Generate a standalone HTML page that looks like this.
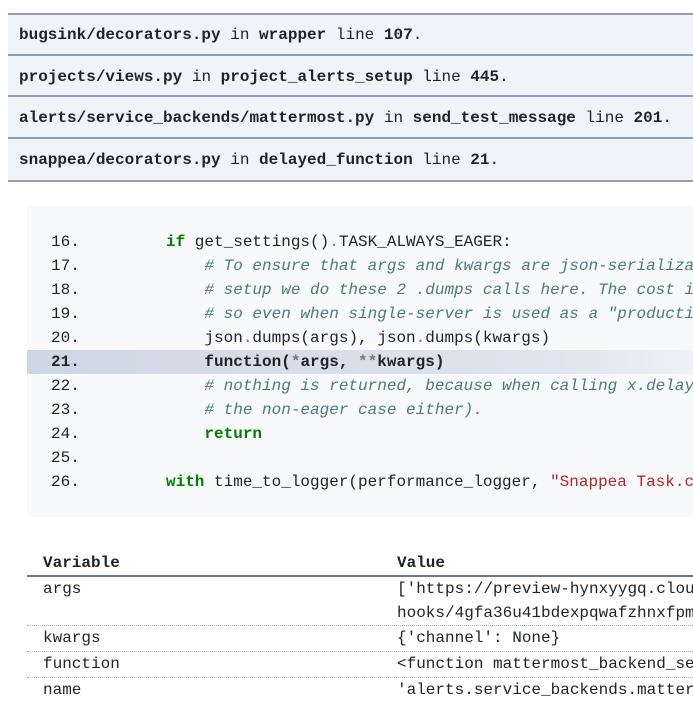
<!DOCTYPE html>
<html><head><meta charset="utf-8"><style>
html,body{margin:0;width:693px;height:718px;overflow:hidden}
body{background:#fff;font-family:"Liberation Mono",monospace;font-size:16px;color:#1f2328;position:relative}
.fr{position:absolute;left:8px;width:685px;height:41px;background:#f0f3f8;border-bottom:2px solid #8f9db3;line-height:41px;box-sizing:border-box;padding-left:11px;white-space:nowrap;overflow:hidden}
b{font-weight:bold}
.code{position:absolute;left:27px;top:206px;width:666px;height:311px;background:#f8f9fb;overflow:hidden}
.ln{position:absolute;left:0;width:666px;height:24px;line-height:25px;white-space:pre;overflow:hidden}
.ln .n{position:absolute;left:24px}
.ln .c{position:absolute;left:139px}
.hl{background:linear-gradient(90deg,#cdd7e3,#dfe5ee 80%,#eef1f5)}
.k{color:#008000;font-weight:bold}
.cm{color:#4b7b7b;font-style:italic}
.s{color:#ba2121}
.o{color:#777}
.t{position:absolute;left:27px;width:666px;white-space:nowrap;overflow:hidden}
.t span{position:absolute}
</style></head><body>
<div class="fr" style="top:13px;border-top:2px solid #8f9db3;height:43px;line-height:40px"><b>bugsink/decorators.py</b> in <b>wrapper</b> line <b>107</b>.</div>
<div class="fr" style="top:56px;line-height:42px"><b>projects/views.py</b> in <b>project_alerts_setup</b> line <b>445</b>.</div>
<div class="fr" style="top:97px;height:42px;line-height:42px"><b>alerts/service_backends/mattermost.py</b> in <b>send_test_message</b> line <b>201</b>.</div>
<div class="fr" style="top:139px;height:43px;line-height:42px"><b>snappea/decorators.py</b> in <b>delayed_function</b> line <b>21</b>.</div>

<div class="code">
<div class="ln" style="top:24px"><span class="n">16.</span><span class="c"><span class="k">if</span> get_settings()<span class="o">.</span>TASK_ALWAYS_EAGER:</span></div>
<div class="ln" style="top:48px"><span class="n">17.</span><span class="c">    <span class="cm"># To ensure that args and kwargs are json-serializable</span></span></div>
<div class="ln" style="top:72px"><span class="n">18.</span><span class="c">    <span class="cm"># setup we do these 2 .dumps calls here. The cost is</span></span></div>
<div class="ln" style="top:96px"><span class="n">19.</span><span class="c">    <span class="cm"># so even when single-server is used as a "production"</span></span></div>
<div class="ln" style="top:120px"><span class="n">20.</span><span class="c">    json<span class="o">.</span>dumps(args), json<span class="o">.</span>dumps(kwargs)</span></div>
<div class="ln hl" style="top:144px;font-weight:bold"><span class="n">21.</span><span class="c">    function(<span class="o">*</span>args, <span class="o">**</span>kwargs)</span></div>
<div class="ln" style="top:168px"><span class="n">22.</span><span class="c">    <span class="cm"># nothing is returned, because when calling x.delay()</span></span></div>
<div class="ln" style="top:192px"><span class="n">23.</span><span class="c">    <span class="cm"># the non-eager case either).</span></span></div>
<div class="ln" style="top:216px"><span class="n">24.</span><span class="c">    <span class="k">return</span></span></div>
<div class="ln" style="top:240px"><span class="n">25.</span></div>
<div class="ln" style="top:264px"><span class="n">26.</span><span class="c"><span class="k">with</span> time_to_logger(performance_logger, <span class="s">"Snappea Task.call"</span></span></div>
</div>

<div class="t" style="top:551px;height:24px;line-height:24px;font-weight:bold;border-bottom:2px solid #6b7a8f"><span style="left:16px">Variable</span><span style="left:370px">Value</span></div>
<div class="t" style="top:577px;height:48px;line-height:24px;border-bottom:1px dotted #a9b3c2"><span style="left:16px">args</span><span style="left:370px">['https://preview-hynxyygq.cloud</span><span style="left:370px;top:24px">hooks/4gfa36u41bdexpqwafzhnxfpm</span></div>
<div class="t" style="top:626px;height:25px;line-height:25px;border-bottom:1px dotted #a9b3c2"><span style="left:16px">kwargs</span><span style="left:370px">{'channel': None}</span></div>
<div class="t" style="top:652px;height:25px;line-height:25px;border-bottom:1px dotted #a9b3c2"><span style="left:16px">function</span><span style="left:370px">&lt;function mattermost_backend_se</span></div>
<div class="t" style="top:678px;height:25px;line-height:25px"><span style="left:16px">name</span><span style="left:370px">'alerts.service_backends.matter</span></div>
</body></html>
